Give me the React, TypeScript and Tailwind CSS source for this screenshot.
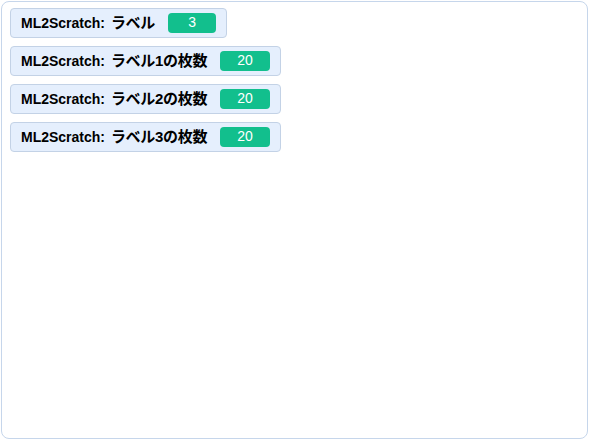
import React from 'react';

const monitors = [
  { name: 'ラベル', value: '3' },
  { name: 'ラベル1の枚数', value: '20' },
  { name: 'ラベル2の枚数', value: '20' },
  { name: 'ラベル3の枚数', value: '20' },
];

function Monitor({ name, value }: { name: string; value: string }) {
  return (
    <div className="flex h-[30px] items-center rounded-[4px] border border-[#c3d2e6] bg-[#e5effd] pl-[10px] pr-[10px]">
      <span className="text-[14px] font-bold text-black">
        ML2Scratch:{' '}
        <span className="ml-[2px] text-[15px] tracking-[-0.3px]">{name}</span>
      </span>
      <span className="ml-[13px] flex h-[20px] min-w-[48px] items-center justify-center rounded-[4px] bg-[#12bf8d] px-[17px] pb-[2px] text-[14px] leading-none text-white">
        {value}
      </span>
    </div>
  );
}

export default function App() {
  return (
    <div
      className="h-[440px] w-[589px] bg-white p-[1px]"
      style={{ fontFamily: '"Liberation Sans", "Noto Sans CJK JP", sans-serif' }}
    >
      <div className="flex h-[438px] w-[587px] flex-col items-start gap-[8px] rounded-[8px] border border-[#c6d6eb] px-[8px] pt-[6px]">
        {monitors.map((m) => (
          <Monitor key={m.name} name={m.name} value={m.value} />
        ))}
      </div>
    </div>
  );
}
